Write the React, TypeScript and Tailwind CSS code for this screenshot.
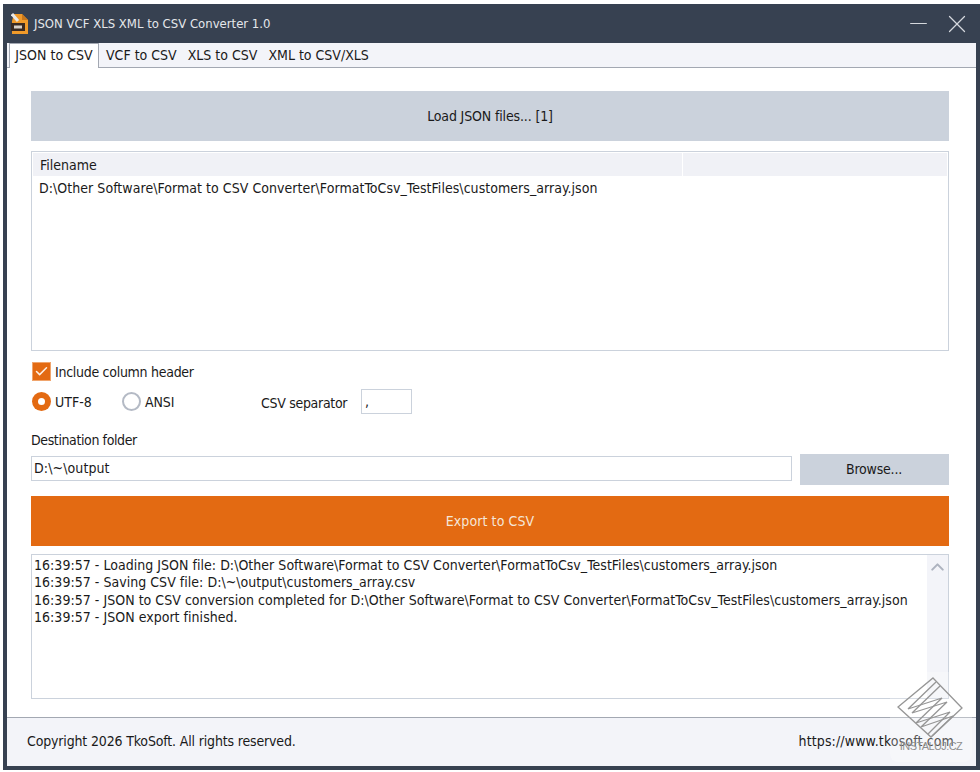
import { X, Minus, ChevronUp, Check } from "lucide-react";

const TABS = ["VCF to CSV", "XLS to CSV", "XML to CSV/XLS"];

const LOG_LINES = [
  "16:39:57 - Loading JSON file: D:\\Other Software\\Format to CSV Converter\\FormatToCsv_TestFiles\\customers_array.json",
  "16:39:57 - Saving CSV file: D:\\~\\output\\customers_array.csv",
  "16:39:57 - JSON to CSV conversion completed for D:\\Other Software\\Format to CSV Converter\\FormatToCsv_TestFiles\\customers_array.json",
  "16:39:57 - JSON export finished.",
];

function AppIcon() {
  return (
    <svg width="18" height="22" viewBox="0 0 18 22" className="shrink-0">
      <path d="M3 1h8l6 6v14H1V8z" fill="#f09a2a" />
      <path d="M11 1v6h6z" fill="#c8771a" />
      <path d="M1 1l6 7" stroke="#e8e8e8" strokeWidth="3" />
      <rect x="0" y="10" width="14" height="8" fill="#3a2a22" />
      <rect x="3" y="12.5" width="8" height="3" fill="#d8d0c8" />
    </svg>
  );
}

function Watermark() {
  return (
    <div className="absolute left-[890px] top-[672px] w-[82px] h-[90px] rounded-lg bg-white/25 flex flex-col items-center">
      <svg width="68" height="64" viewBox="0 0 68 64" fill="none" stroke="#969696" strokeWidth="1.3" className="mt-[4px]">
        <path d="M36 2L65 32L34 61L1 31Z" />
        <path d="M39 6L11 33L45 22L19 47L53 36L31 58" />
        <path d="M43 10L15 37L50 26L24 51L56 40L35 60" />
      </svg>
      <span className="text-[11px] leading-none text-[#8f8f8f] tracking-[-0.6px] mt-[1px] font-['Liberation_Sans',sans-serif]">
        INSTALUJ.CZ
      </span>
    </div>
  );
}

export default function App() {
  return (
    <div className="relative w-[980px] h-[772px] bg-white pl-[3px] pt-[4px] pb-[2px] overflow-hidden font-['DejaVu_Sans',sans-serif] font-stretch-condensed text-[14px] text-[#1a1a1a]">
      <div className="h-full bg-[#374151] flex flex-col px-[4px] pb-[4px]">
        <div className="h-[39px] shrink-0 flex items-center pl-[4px] pr-[4px] text-[#e5e7eb]">
          <AppIcon />
          <span className="ml-[5px] text-[13px]">JSON VCF XLS XML to CSV Converter 1.0</span>
          <Minus className="ml-auto size-[27px] text-[#d5d8dd]" strokeWidth={1} />
          <X className="ml-[10px] size-[30px] text-[#d5d8dd]" strokeWidth={1} />
        </div>

        <div className="flex-1 flex flex-col bg-white min-h-0">
          <div className="h-[25px] shrink-0 flex items-end bg-[#f3f4f9] border-b border-[#a3a8b2] pl-[2px]">
            <div className="h-[25px] w-[90px] mb-[-1px] pb-[2px] bg-white border border-b-0 border-[#a3a8b2] flex items-center justify-center tracking-[0.03px]">
              JSON to CSV
            </div>
            <div className="flex h-[24px] items-center gap-[11px] pl-[7px]">
              {TABS.map((t) => (
                <span key={t}>{t}</span>
              ))}
            </div>
          </div>

          <div className="flex-1 flex flex-col pl-[24px] pr-[27px] pt-[23px] min-h-0">
            <button className="h-[50px] shrink-0 bg-[#cbd2dc] tracking-[-0.14px]">Load JSON files... [1]</button>

            <div className="mt-[10px] h-[200px] shrink-0 border border-[#cbd2dc] p-[1px]">
              <div className="flex h-[23px] bg-[#f0f1f6]">
                <div className="w-[650px] pl-[7px] pt-[2px] flex items-center border-r border-white">Filename</div>
              </div>
              <div className="pl-[6px] pt-[2px] tracking-[0.045px]">
                D:\Other Software\Format to CSV Converter\FormatToCsv_TestFiles\customers_array.json
              </div>
            </div>

            <div className="mt-[11px] flex items-center gap-[4px] pl-[1px] h-[19px]">
              <div className="size-[19px] bg-[#e36a12] border border-[#f0a56d] flex items-center justify-center">
                <Check className="size-[15px] text-[#fdf0e5]" strokeWidth={2.4} />
              </div>
              <span className="pt-[2px] tracking-[-0.28px]">Include column header</span>
            </div>

            <div className="mt-[8px] flex items-center h-[25px]">
              <div className="ml-[1px] size-[19px] rounded-full bg-[#e36a12] flex items-center justify-center">
                <div className="size-[7px] rounded-full bg-white" />
              </div>
              <span className="ml-[4px] w-[67px] pt-[1px]">UTF-8</span>
              <div className="size-[19px] rounded-full border-2 border-[#b4bac5]" />
              <span className="ml-[4px] w-[116px] pt-[1px] tracking-[-0.1px]">ANSI</span>
              <span className="w-[100px] pt-[3px] tracking-[-0.3px]">CSV separator</span>
              <div className="w-[51px] h-[25px] border border-[#cbd2dc] pl-[3px] flex items-center">,</div>
            </div>

            <div className="mt-[18px] h-[17px] leading-[17px] tracking-[-0.39px]">Destination folder</div>

            <div className="mt-[5px] flex items-start gap-[8px]">
              <div className="w-[761px] h-[25px] mt-[2px] border border-[#cbd2dc] pl-[2px] flex items-center tracking-[0.1px]">
                D:\~\output
              </div>
              <button className="flex-1 h-[31px] bg-[#cbd2dc] tracking-[-0.2px] pr-[1px]">Browse...</button>
            </div>

            <button className="mt-[11px] h-[50px] shrink-0 bg-[#e36a12] text-[#f5e6d8] tracking-[0.1px]">Export to CSV</button>

            <div className="mt-[8px] h-[145px] shrink-0 border border-[#cbd2dc] flex">
              <div className="flex-1 pl-[2px] pt-[2px] leading-[17.3px] tracking-[0.03px]">
                {LOG_LINES.map((l) => (
                  <div key={l}>{l}</div>
                ))}
              </div>
              <div className="w-[21px] bg-[#f3f4f9] flex justify-center pt-[1px]">
                <ChevronUp className="size-[22px] text-[#adb3bf]" strokeWidth={2.4} />
              </div>
            </div>
          </div>

          <div className="h-[49px] shrink-0 pb-[1px] bg-[#f3f4f9] border-t border-[#a3a8b2] flex items-center justify-between pl-[20px] pr-[22px]">
            <span className="tracking-[-0.16px]">Copyright 2026 TkoSoft. All rights reserved.</span>
            <span className="tracking-[0.13px]">https://www.tkosoft.com</span>
          </div>
        </div>
      </div>
      <Watermark />
    </div>
  );
}
